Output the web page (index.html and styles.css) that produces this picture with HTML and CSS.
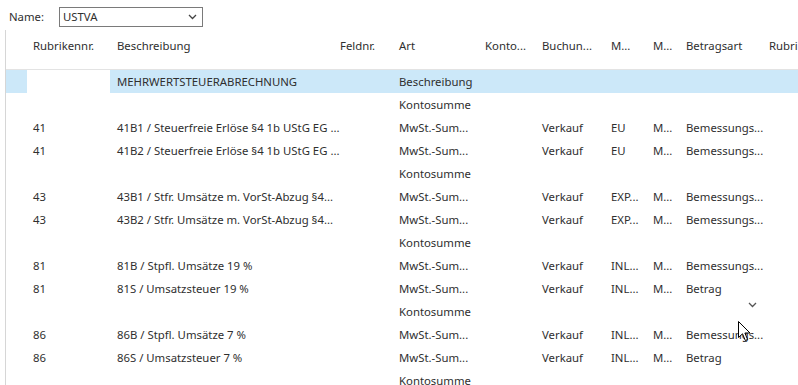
FILE: index.html
```html
<!DOCTYPE html>
<html>
<head>
<meta charset="utf-8">
<link rel="stylesheet" href="styles.css">
</head>
<body>
<div class="page">
  <div class="toolbar">
    <span class="label">Name:</span>
    <div class="select">
      <span>USTVA</span>
      <svg class="chev" width="9" height="6" viewBox="0 0 9 6"><path d="M1 1 L4.5 4.5 L8 1" fill="none" stroke="#444" stroke-width="1.3"/></svg>
    </div>
  </div>
  <div class="grid">
    <div class="row head">
      <div class="c"></div><div class="c">Rubrikennr.</div><div class="c">Beschreibung</div><div class="c">Feldnr.</div><div class="c">Art</div><div class="c">Konto...</div><div class="c">Buchun...</div><div class="c">M...</div><div class="c">M...</div><div class="c">Betragsart</div><div class="c">Rubri</div>
    </div>
    <div class="row sel">
      <div class="c ind"></div><div class="c cur"></div><div class="c">MEHRWERTSTEUERABRECHNUNG</div><div class="c"></div><div class="c">Beschreibung</div><div class="c"></div><div class="c"></div><div class="c"></div><div class="c"></div><div class="c"></div><div class="c"></div>
    </div>
    <div class="row"><div class="c"></div><div class="c"></div><div class="c"></div><div class="c"></div><div class="c">Kontosumme</div><div class="c"></div><div class="c"></div><div class="c"></div><div class="c"></div><div class="c"></div><div class="c"></div></div>
    <div class="row"><div class="c"></div><div class="c">41</div><div class="c">41B1 / Steuerfreie Erlöse §4 1b UStG EG ...</div><div class="c"></div><div class="c">MwSt.-Sum...</div><div class="c"></div><div class="c">Verkauf</div><div class="c">EU</div><div class="c">M...</div><div class="c">Bemessungs...</div><div class="c"></div></div>
    <div class="row"><div class="c"></div><div class="c">41</div><div class="c">41B2 / Steuerfreie Erlöse §4 1b UStG EG ...</div><div class="c"></div><div class="c">MwSt.-Sum...</div><div class="c"></div><div class="c">Verkauf</div><div class="c">EU</div><div class="c">M...</div><div class="c">Bemessungs...</div><div class="c"></div></div>
    <div class="row"><div class="c"></div><div class="c"></div><div class="c"></div><div class="c"></div><div class="c">Kontosumme</div><div class="c"></div><div class="c"></div><div class="c"></div><div class="c"></div><div class="c"></div><div class="c"></div></div>
    <div class="row"><div class="c"></div><div class="c">43</div><div class="c">43B1 / Stfr. Umsätze m. VorSt-Abzug §4...</div><div class="c"></div><div class="c">MwSt.-Sum...</div><div class="c"></div><div class="c">Verkauf</div><div class="c">EXP...</div><div class="c">M...</div><div class="c">Bemessungs...</div><div class="c"></div></div>
    <div class="row"><div class="c"></div><div class="c">43</div><div class="c">43B2 / Stfr. Umsätze m. VorSt-Abzug §4...</div><div class="c"></div><div class="c">MwSt.-Sum...</div><div class="c"></div><div class="c">Verkauf</div><div class="c">EXP...</div><div class="c">M...</div><div class="c">Bemessungs...</div><div class="c"></div></div>
    <div class="row"><div class="c"></div><div class="c"></div><div class="c"></div><div class="c"></div><div class="c">Kontosumme</div><div class="c"></div><div class="c"></div><div class="c"></div><div class="c"></div><div class="c"></div><div class="c"></div></div>
    <div class="row"><div class="c"></div><div class="c">81</div><div class="c">81B / Stpfl. Umsätze 19 %</div><div class="c"></div><div class="c">MwSt.-Sum...</div><div class="c"></div><div class="c">Verkauf</div><div class="c">INL...</div><div class="c">M...</div><div class="c">Bemessungs...</div><div class="c"></div></div>
    <div class="row"><div class="c"></div><div class="c">81</div><div class="c">81S / Umsatzsteuer 19 %</div><div class="c"></div><div class="c">MwSt.-Sum...</div><div class="c"></div><div class="c">Verkauf</div><div class="c">INL...</div><div class="c">M...</div><div class="c">Betrag</div><div class="c"></div></div>
    <div class="row"><div class="c"></div><div class="c"></div><div class="c"></div><div class="c"></div><div class="c">Kontosumme</div><div class="c"></div><div class="c"></div><div class="c"></div><div class="c"></div><div class="c drop"><svg width="9" height="6" viewBox="0 0 9 6"><path d="M1 1 L4.5 4.5 L8 1" fill="none" stroke="#555" stroke-width="1.3"/></svg></div><div class="c"></div></div>
    <div class="row"><div class="c"></div><div class="c">86</div><div class="c">86B / Stpfl. Umsätze 7 %</div><div class="c"></div><div class="c">MwSt.-Sum...</div><div class="c"></div><div class="c">Verkauf</div><div class="c">INL...</div><div class="c">M...</div><div class="c">Bemessungs...</div><div class="c"></div></div>
    <div class="row"><div class="c"></div><div class="c">86</div><div class="c">86S / Umsatzsteuer 7 %</div><div class="c"></div><div class="c">MwSt.-Sum...</div><div class="c"></div><div class="c">Verkauf</div><div class="c">INL...</div><div class="c">M...</div><div class="c">Betrag</div><div class="c"></div></div>
    <div class="row"><div class="c"></div><div class="c"></div><div class="c"></div><div class="c"></div><div class="c">Kontosumme</div><div class="c"></div><div class="c"></div><div class="c"></div><div class="c"></div><div class="c"></div><div class="c"></div></div>
  </div>
  <svg class="cursor" width="14" height="22" viewBox="0 0 14 22"><path d="M0.5 0.5 L0.5 16.5 L4.5 12.8 L7.3 19.5 L9.6 18.5 L6.9 12 L12 12 Z" fill="#fff" stroke="#000" stroke-width="1" stroke-linejoin="miter"/></svg>
</div>
</body>
</html>
```
FILE: styles.css
```css
html, body { margin: 0; padding: 0; background: #fff; }
body { font-family: "Noto Sans", "Open Sans", sans-serif; font-size: 11.35px; color: #2f2f2f; }
.page { position: relative; width: 798px; height: 385px; overflow: hidden; }
.toolbar { display: flex; align-items: center; height: 30px; padding-left: 9px; box-sizing: border-box; padding-top: 3px; }
.label { width: 50px; }
.select { width: 144px; height: 20px; box-sizing: border-box; border: 1px solid #7a7a7a; display: flex; align-items: center; justify-content: space-between; padding: 0 5px 0 3px; }
.chev { display: block; }
.grid { margin-left: 5px; border-left: 1px solid #d6d6d6; }
.row { display: grid; grid-template-columns: 21px 83px 224px 59px 86px 57px 69px 42px 33px 83px 60px; height: 23px; align-items: center; }
.row .c { padding-left: 6px; white-space: nowrap; height: 100%; display: flex; align-items: center; box-sizing: border-box; min-width: 0; }
.row .c:nth-child(3) { padding-left: 7px; }
.row .c:last-child { overflow: hidden; }
.head { height: 39px; border-bottom: 1px solid #e3e3e3; }
.head .c { padding-bottom: 8px; }
.sel { background: #cce8f9; }
.sel .cur { background: #fff; }
.drop { justify-content: flex-end; padding-right: 6px; align-items: flex-start !important; padding-top: 2px; }
.cursor { position: absolute; left: 738px; top: 321px; }
```
